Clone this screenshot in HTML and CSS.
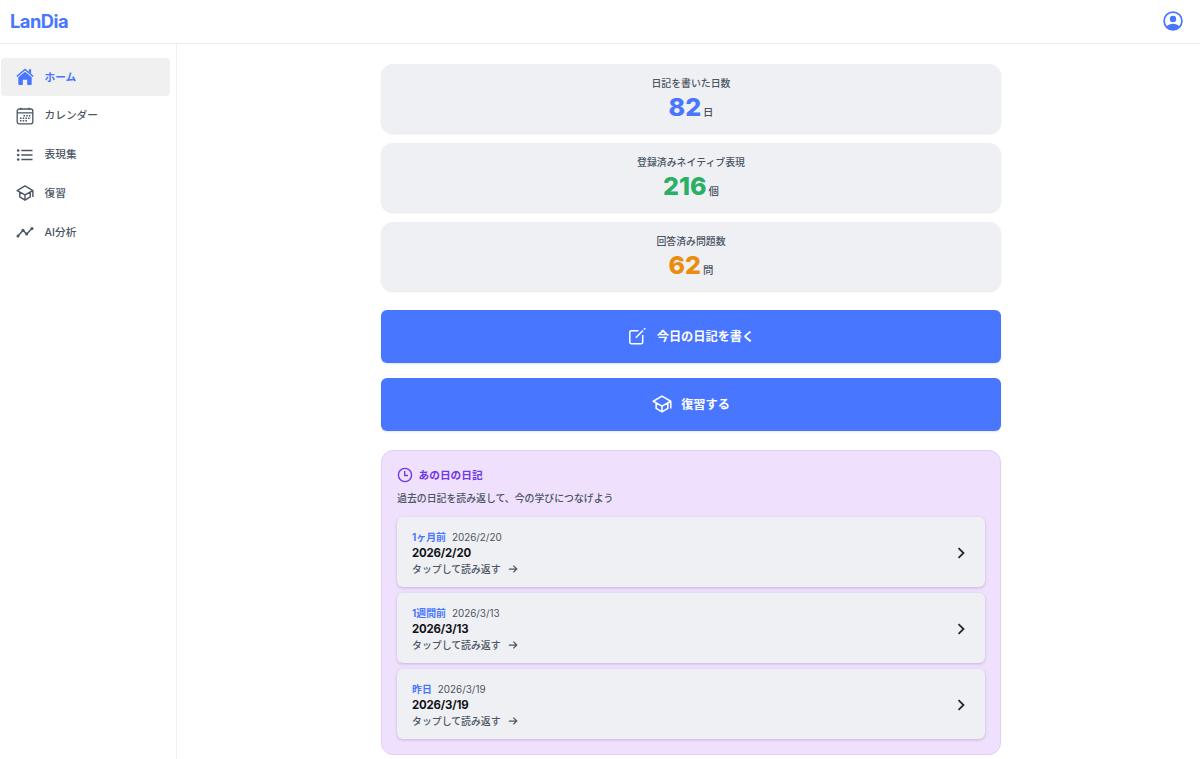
FILE: index.html
```html
<!DOCTYPE html>
<html lang="ja">
<head>
    <meta charset="UTF-8">
    <title>LanDia</title>
    <link rel="stylesheet" href="styles.css">
</head>
<body>
    <svg class="defs">
        <symbol id="cap" viewBox="0 0 24 24">
            <path d="M12 2.500 1.500 8.700 12 14.500 22.500 8.700zM5 11v6.300L12 21.500 19 17.300V11M22.500 8.700v8.600M12 14.500v7" fill="none" stroke="currentColor" stroke-width="1.900" stroke-linejoin="round"/>
        </symbol>
        <symbol id="arrow" viewBox="0 0 12 12">
            <path d="M1 6h9.500M6.500 2 10.500 6l-4 4" fill="none" stroke="currentColor" stroke-width="1.500"/>
        </symbol>
        <symbol id="chevron" viewBox="0 0 12 12">
            <path d="M3.500 1.200 8.500 6l-5 4.800" fill="none" stroke="currentColor" stroke-width="1.800"/>
        </symbol>
    </svg>
    <header class="header">
        <div class="logo">LanDia</div>
        <svg class="user" viewBox="0 0 20 20">
            <circle cx="10" cy="10" r="8.900" fill="none" stroke="currentColor" stroke-width="1.700"/>
            <circle cx="10" cy="7.900" r="3.200" fill="currentColor"/>
            <path d="M3.600 15.600C5 13.500 7.500 12.700 10 12.700s5 .8 6.400 2.900A9 9 0 0 1 10 18.900a9 9 0 0 1-6.400-3.300z" fill="currentColor"/>
        </svg>
    </header>
    <div class="layout">
        <nav class="sidebar">
            <a class="nav-item active">
                <svg viewBox="0 0 18 18"><path d="M9 3.700 15.700 9.300V16a1 1 0 0 1-1 1h-3.500v-5.300H6.800V17H3.300a1 1 0 0 1-1-1V9.300z" fill="currentColor"/><path d="M.8 8.500 9 1.500l8.200 7" fill="none" stroke="currentColor" stroke-width="1.600"/><path d="M12.800 1.300h2.300v4.500l-2.300-2z" fill="currentColor"/></svg>
                <span>ホーム</span>
            </a>
            <a class="nav-item">
                <svg viewBox="0 0 18 18" fill="none" stroke="currentColor">
                    <rect x="1.200" y="2" width="15.600" height="14.800" rx="2" stroke-width="1.300"/>
                    <path d="M1.200 5.800h15.600M4.800.8V3M13.200.8V3" stroke-width="1.300"/>
                    <path d="M7.500 8.700h7.500M4 11.200h11M4 13.700h7.500" stroke-width="1.500" stroke-dasharray="1.500 1.200"/>
                </svg>
                <span>カレンダー</span>
            </a>
            <a class="nav-item">
                <svg viewBox="0 0 18 18" stroke="currentColor" fill="currentColor">
                    <path d="M5.300 4.500h11.200M5.300 9h11.200M5.300 13.500h11.200" stroke-width="1.300"/>
                    <g stroke="none"><circle cx="2.200" cy="4.500" r="1.300"/><circle cx="2.200" cy="9" r="1.300"/><circle cx="2.200" cy="13.500" r="1.300"/></g>
                </svg>
                <span>表現集</span>
            </a>
            <a class="nav-item">
                <svg><use href="#cap"/></svg>
                <span>復習</span>
            </a>
            <a class="nav-item">
                <svg viewBox="0 0 18 18" stroke="currentColor" fill="currentColor">
                    <path d="M2 13 7 7.300l3.700 3.700L16 5.500" fill="none" stroke-width="1.500"/>
                    <g stroke="none"><circle cx="2" cy="13" r="1.500"/><circle cx="7" cy="7.300" r="1.500"/><circle cx="10.700" cy="11" r="1.500"/><circle cx="16" cy="5.500" r="1.500"/></g>
                </svg>
                <span>AI分析</span>
            </a>
        </nav>
        <main class="main">
            <div class="stats">
                <div class="stat">
                    <div class="stat-label">日記を書いた日数</div>
                    <div class="stat-value"><b class="blue">82</b><span>日</span></div>
                </div>
                <div class="stat">
                    <div class="stat-label">登録済みネイティブ表現</div>
                    <div class="stat-value"><b class="green">216</b><span>個</span></div>
                </div>
                <div class="stat">
                    <div class="stat-label">回答済み問題数</div>
                    <div class="stat-value"><b class="orange">62</b><span>問</span></div>
                </div>
            </div>
            <div class="actions">
                <button class="action">
                    <svg viewBox="0 0 18 18" fill="none" stroke="currentColor" stroke-width="1.500"><path d="M10.500 3.800H3.200a1.400 1.400 0 0 0-1.400 1.400v10.100a1.400 1.400 0 0 0 1.400 1.400h10.100a1.400 1.400 0 0 0 1.400-1.400V8M7.800 10.700 15 3.500M16 2.500l1.300-1.300"/></svg>
                    <span>今日の日記を書く</span>
                </button>
                <button class="action review">
                    <svg><use href="#cap"/></svg>
                    <span>復習する</span>
                </button>
            </div>
            <section class="memories">
                <h2>
                    <svg viewBox="0 0 16 16" fill="none" stroke="currentColor" stroke-width="1.400"><circle cx="8" cy="8" r="6.600"/><path d="M7.700 4v4.500h3.300"/></svg>
                    <span>あの日の日記</span>
                </h2>
                <p>過去の日記を読み返して、今の学びにつなげよう</p>
                <div class="entries">
                    <div class="entry">
                        <div>
                            <div class="when"><b>1ヶ月前</b><span>2026/2/20</span></div>
                            <div class="title">2026/2/20</div>
                            <div class="more">タップして読み返す<svg><use href="#arrow"/></svg></div>
                        </div>
                        <svg class="chevron"><use href="#chevron"/></svg>
                    </div>
                    <div class="entry">
                        <div>
                            <div class="when"><b>1週間前</b><span>2026/3/13</span></div>
                            <div class="title">2026/3/13</div>
                            <div class="more">タップして読み返す<svg><use href="#arrow"/></svg></div>
                        </div>
                        <svg class="chevron"><use href="#chevron"/></svg>
                    </div>
                    <div class="entry">
                        <div>
                            <div class="when"><b>昨日</b><span>2026/3/19</span></div>
                            <div class="title">2026/3/19</div>
                            <div class="more">タップして読み返す<svg><use href="#arrow"/></svg></div>
                        </div>
                        <svg class="chevron"><use href="#chevron"/></svg>
                    </div>
                </div>
            </section>
        </main>
    </div>
</body>
</html>
```
FILE: styles.css
```css
* {
    box-sizing: border-box;
}
body {
    margin: 0;
    height: 759px;
    overflow: hidden;
    font-family: Inter, "Noto Sans CJK JP", sans-serif;
    font-size: 9.9px;
    color: #4b5563;
    background-color: #fff;
}
svg {
    flex-shrink: 0;
}
.defs {
    display: none;
}
.header {
    display: flex;
    justify-content: space-between;
    align-items: center;
    height: 44px;
    padding: 0 17px 2px 10px;
    border-bottom: 1px solid #ececee;
    color: #4876ff;
}
.logo {
    font-size: 18.3px;
    font-weight: 700;
    letter-spacing: -0.5px;
}
.user {
    width: 20px;
    height: 20px;
}
.layout {
    display: flex;
    height: 715px;
}
.sidebar {
    width: 177px;
    padding: 14px 6px 0 1px;
    border-right: 1px solid #f0f0f2;
}
.nav-item {
    display: flex;
    align-items: center;
    gap: 10.5px;
    height: 38px;
    margin-bottom: 0.8px;
    padding-left: 15px;
    border-radius: 4px;
    font-size: 10.7px;
    font-weight: 500;
}
.nav-item svg {
    width: 18px;
    height: 18px;
}
.nav-item span {
    padding-bottom: 2px;
}
.nav-item.active {
    background-color: #f0f0f0;
    color: #4876ff;
    font-weight: 600;
}
.main {
    width: 620px;
    margin: 20px 0 0 204px;
}
.stats {
    display: flex;
    flex-direction: column;
    gap: 10.2px;
}
.stat {
    height: 69px;
    padding-top: 11px;
    text-align: center;
    background-color: #eff0f4;
    border-radius: 12px;
    box-shadow: 0 1px 2px rgba(0, 0, 0, 0.1);
}
.stat-label {
    line-height: 16px;
    font-weight: 500;
}
.stat-value {
    display: flex;
    justify-content: center;
    align-items: baseline;
    gap: 2px;
    line-height: 32px;
}
.stat-value b {
    font-size: 25px;
    font-weight: 800;
}
.stat-value span {
    font-size: 10.4px;
    font-weight: 500;
}
.blue {
    color: #4876ff;
}
.green {
    color: #2bae66;
}
.orange {
    color: #ea8c0c;
}
.actions {
    display: flex;
    flex-direction: column;
    gap: 15px;
    margin-top: 18.6px;
}
.action {
    display: flex;
    justify-content: center;
    align-items: center;
    gap: 11px;
    height: 53px;
    border: none;
    border-radius: 6px;
    background-color: #4876ff;
    color: #fff;
    font-family: inherit;
    font-size: 12.2px;
    font-weight: 700;
    box-shadow: 0 1px 2px rgba(0, 0, 0, 0.1);
}
.action svg {
    width: 18px;
    height: 18px;
}
.action.review {
    gap: 9px;
}
.action.review svg {
    width: 20px;
    height: 20px;
}
.memories {
    height: 304.5px;
    margin-top: 19.4px;
    padding: 16px 15px 0;
    border: 1px solid #e2cefb;
    border-radius: 12px;
    background-color: #efe0fd;
}
.memories h2 {
    display: flex;
    align-items: center;
    gap: 5.5px;
    height: 16px;
    margin: 0;
    font-size: 10.7px;
    color: #7137e8;
}
.memories h2 svg {
    width: 16px;
    height: 16px;
}
.memories h2 span {
    padding-bottom: 1px;
}
.memories p {
    margin: 7px 0 11px;
    line-height: 16px;
    font-weight: 500;
}
.entries {
    display: flex;
    flex-direction: column;
    gap: 6px;
}
.entry {
    display: flex;
    justify-content: space-between;
    align-items: center;
    height: 70px;
    padding: 1px 18px 0 15px;
    border-radius: 6px;
    background-color: #eff0f4;
    box-shadow: 0 1px 3px rgba(80, 50, 120, 0.25);
    line-height: 16px;
}
.when {
    display: flex;
    gap: 6px;
}
.when b {
    color: #4876ff;
}
.title {
    font-size: 11.4px;
    font-weight: 700;
    letter-spacing: -0.15px;
    color: #111318;
}
.more {
    display: flex;
    align-items: center;
    gap: 7px;
    font-weight: 500;
}
.more svg {
    width: 10px;
    height: 10px;
}
.chevron {
    width: 12px;
    height: 12px;
    color: #27292e;
}
```
